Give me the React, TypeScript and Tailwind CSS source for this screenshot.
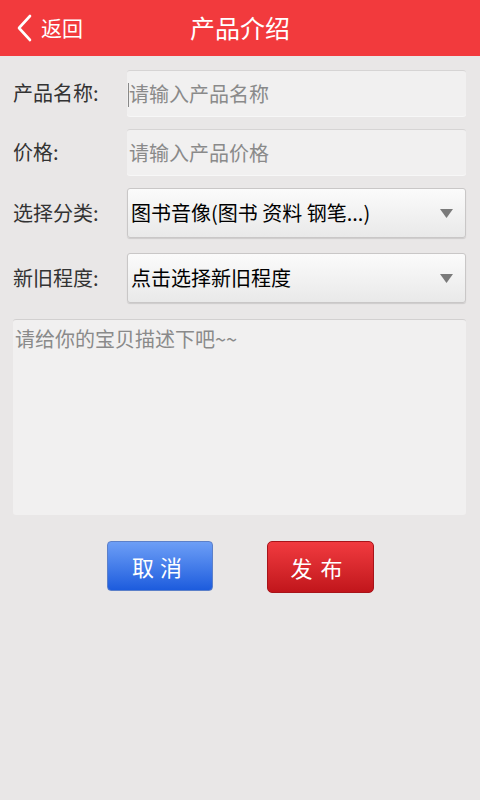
const font = "font-['Noto_Sans_CJK_SC',_'Noto_Sans',sans-serif]";

function Label({ text }: { text: string }) {
  return <span className="w-[114px] shrink-0 text-[20px] text-[#333]">{text}</span>;
}

function Field({ label, placeholder, caret }: { label: string; placeholder: string; caret?: boolean }) {
  return (
    <div className="flex items-center">
      <Label text={label} />
      <div className="relative flex h-[46px] flex-1 items-center rounded-[3px] border-t border-[#d6d4d4] bg-[#f1f0f0] pl-[2px] text-[20px] text-[#8a8a8a] shadow-[0_1px_0_#f7f7f7]">
        {caret && <span className="absolute left-[1px] top-[12px] h-[24px] w-px bg-[#888]" />}
        {placeholder}
      </div>
    </div>
  );
}

function Select({ label, value }: { label: string; value: string }) {
  return (
    <div className="flex items-center">
      <Label text={label} />
      <div className="flex h-[50px] flex-1 items-center justify-between rounded-[3px] border border-[#c9c7c7] bg-gradient-to-b from-[#fbfbfb] to-[#e9e9e9] pl-[3px] pr-[12px] text-[20px] text-black shadow-[0_1px_1px_rgba(0,0,0,0.12)]">
        <span>{value}</span>
        <svg width="13" height="9" viewBox="0 0 13 9">
          <path d="M0 0 H13 L6.5 9 Z" fill="#7a7a7a" />
        </svg>
      </div>
    </div>
  );
}

export default function App() {
  return (
    <div className={`${font} h-[800px] w-[480px] bg-[#e9e7e7]`}>
      <header className="relative flex h-[56px] items-center justify-center bg-[#f23a3d] text-white">
        <div className="absolute left-[16px] top-0 flex h-full items-center gap-[9px]">
          <svg width="16" height="28" viewBox="0 0 16 28">
            <path d="M14 2 L3 14 L14 26" fill="none" stroke="white" strokeWidth="2.6" strokeLinecap="round" strokeLinejoin="round" />
          </svg>
          <span className="text-[21px]">返回</span>
        </div>
        <h1 className="text-[25px]">产品介绍</h1>
      </header>

      <div className="flex flex-col pl-[13px] pr-[14px] pt-[14px]">
        <div className="flex flex-col gap-[13px]">
          <Field label="产品名称:" placeholder="请输入产品名称" caret />
          <Field label="价格:" placeholder="请输入产品价格" />
        </div>
        <div className="mt-[13px] flex flex-col gap-[15px]">
          <Select label="选择分类:" value="图书音像(图书 资料 钢笔...)" />
          <Select label="新旧程度:" value="点击选择新旧程度" />
        </div>
        <div className="mt-[16px] h-[196px] rounded-[3px] border-t border-[#d2d0d0] bg-[#f1f0f0] px-[2px] pt-[5px] text-[20px] leading-[28px] text-[#8a8a8a]">
          请给你的宝贝描述下吧~~
        </div>

        <div className="mt-[26px] flex gap-[54px] pl-[94px]">
          <button className="h-[50px] w-[106px] rounded-[4px] border border-[#5c80c9] bg-gradient-to-b from-[#6d9ef6] to-[#1c5bdd] text-[22px] tracking-[6px] text-white">
            取消
          </button>
          <button className="h-[52px] w-[107px] rounded-[5px] border border-[#a8141a] bg-gradient-to-b from-[#f13a3f] to-[#c1151b] text-[22px] tracking-[8px] text-white">
            发布
          </button>
        </div>
      </div>
    </div>
  );
}
